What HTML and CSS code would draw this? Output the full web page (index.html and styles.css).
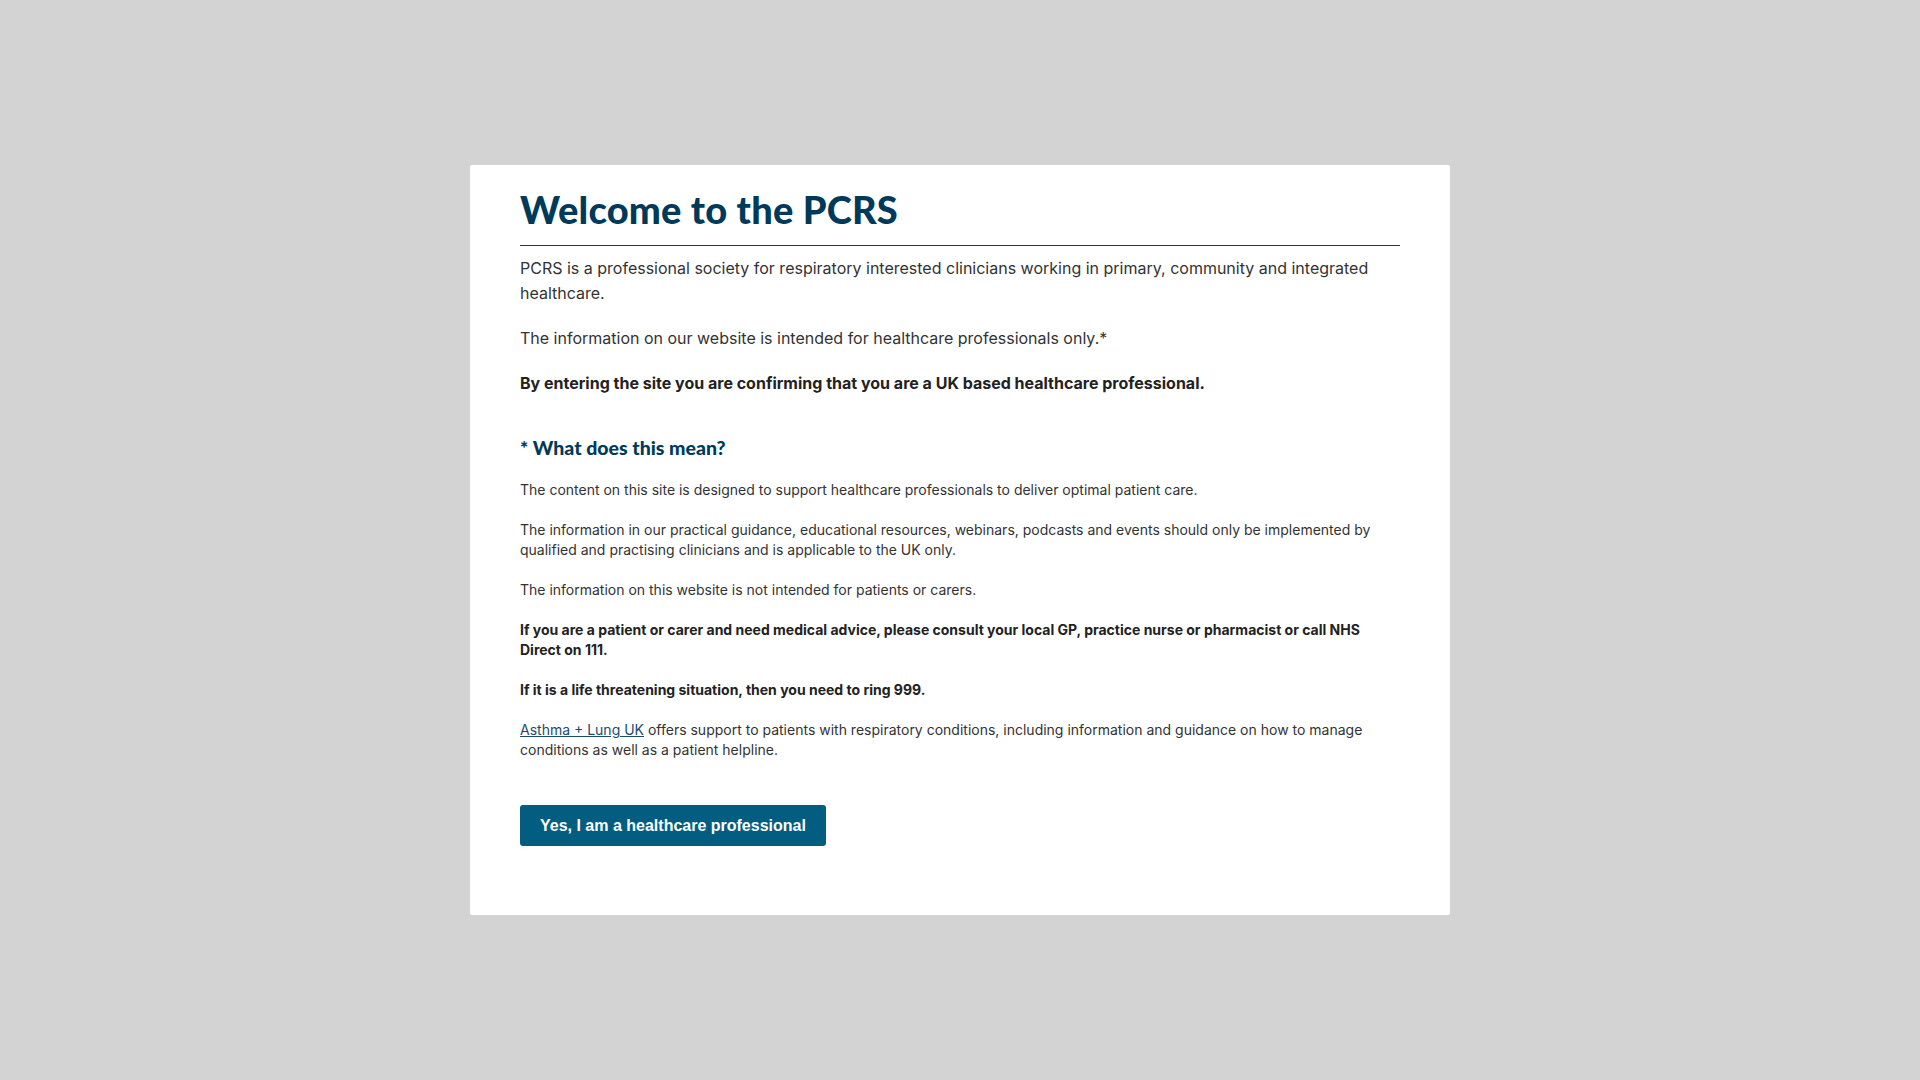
FILE: index.html
```html
<!DOCTYPE html>
<html lang="en">
<head>
<meta charset="utf-8">
<title>Welcome to the PCRS</title>
<link rel="stylesheet" href="styles.css">
</head>
<body>
<div class="overlay">
  <div class="modal">
    <h1 class="title">Welcome to the PCRS</h1>
    <div class="intro">
      <p>PCRS is a professional society for respiratory interested clinicians working in primary, community and integrated healthcare.</p>
      <p>The information on our website is intended for healthcare professionals only.*</p>
      <p class="strong">By entering the site you are confirming that you are a UK based healthcare professional.</p>
    </div>
    <h2 class="subtitle">* What does this mean?</h2>
    <div class="details">
      <p>The content on this site is designed to support healthcare professionals to deliver optimal patient care.</p>
      <p>The information in our practical guidance, educational resources, webinars, podcasts and events should only be implemented by qualified and practising clinicians and is applicable to the UK only.</p>
      <p>The information on this website is not intended for patients or carers.</p>
      <p class="strong">If you are a patient or carer and need medical advice, please consult your local GP, practice nurse or pharmacist or call NHS Direct on 111.</p>
      <p class="strong">If it is a life threatening situation, then you need to ring 999.</p>
      <p><a class="link" href="#">Asthma + Lung UK</a> offers support to patients with respiratory conditions, including information and guidance on how to manage conditions as well as a patient helpline.</p>
    </div>
    <button class="confirm" type="button">Yes, I am a healthcare professional</button>
  </div>
</div>
</body>
</html>
```

FILE: styles.css
```css
html, body {
  margin: 0;
  padding: 0;
  height: 100%;
}
body {
  background: #d3d3d3;
  font-family: Inter, "Liberation Sans", sans-serif;
  color: #333;
}
.overlay {
  height: 100%;
  display: flex;
  align-items: center;
  justify-content: center;
}
.modal {
  box-sizing: border-box;
  width: 980px;
  height: 750px;
  background: #fff;
  border-radius: 2px;
  padding: 20px 50px 70px;
}
.title {
  margin: 0;
  font-family: Lato, "Liberation Sans", sans-serif;
  font-weight: 900;
  font-size: 38px;
  letter-spacing: 0.2px;
  line-height: 48px;
  color: #003a5a;
  padding-bottom: 12px;
  border-bottom: 1px solid #333;
}
.intro {
  margin-top: 10px;
  font-size: 16px;
  line-height: 24.5px;
}
.intro p {
  margin: 0 0 20.5px;
}
.intro p:last-child {
  margin-bottom: 0;
}
.strong {
  font-weight: 700;
  color: #222;
}
.subtitle {
  margin: 39px 0 0;
  font-family: Lato, "Liberation Sans", sans-serif;
  font-weight: 900;
  font-size: 19.5px;
  line-height: 28px;
  color: #003a5a;
}
.details {
  margin-top: 18px;
  font-size: 14px;
  line-height: 20px;
}
.details p {
  margin: 0 0 20px;
}
.details p:last-child {
  margin-bottom: 0;
}
.link {
  color: #1b4d6b;
  text-decoration: underline;
}
.confirm {
  margin-top: 45px;
  height: 41px;
  padding: 0 20px;
  border: none;
  border-radius: 3px;
  background: #025d80;
  color: #fff;
  font-family: "Liberation Sans", Arial, sans-serif;
  font-weight: 700;
  font-size: 16px;
  cursor: pointer;
}
```
